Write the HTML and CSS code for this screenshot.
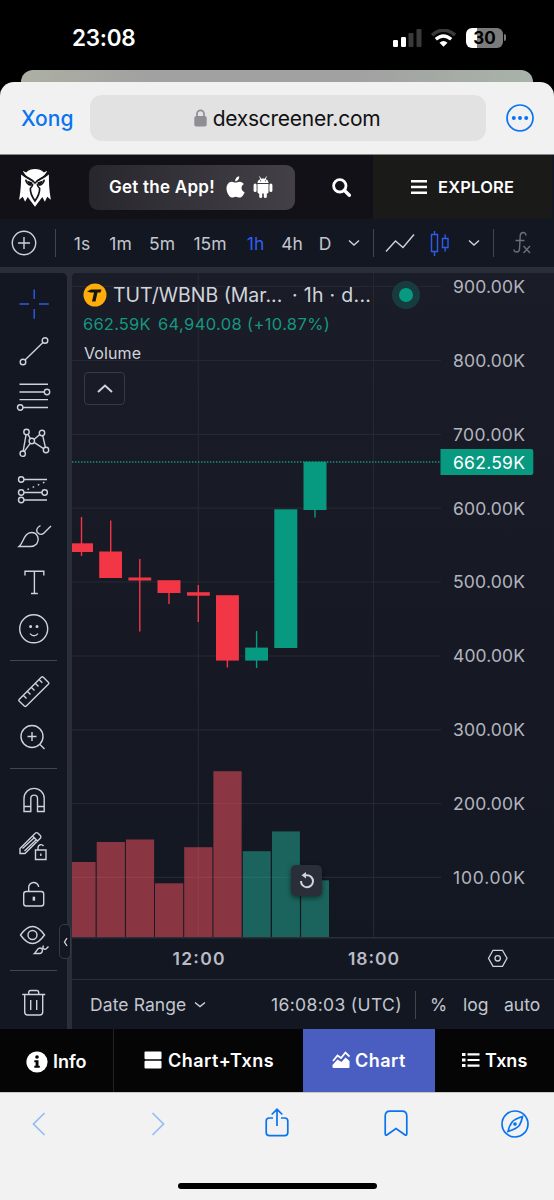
FILE: index.html
```html
<!DOCTYPE html>
<html lang="vi">

<head>
  <meta charset="utf-8">
  <title>TUT/WBNB - dexscreener.com</title>
  <link rel="stylesheet" href="styles.css">
</head>

<body>
  <div class="phone">
    <div class="status">
      <span class="clock">23:08</span>
      <svg class="signal" width="29" height="18" viewBox="0 0 29 18">
        <rect x="0" y="11" width="5" height="7" rx="1.3" fill="#fff"/>
        <rect x="8" y="8" width="5" height="10" rx="1.3" fill="#fff"/>
        <rect x="15.5" y="4" width="5" height="14" rx="1.3" fill="#3a3a3a"/>
        <rect x="23.5" y="0" width="5" height="18" rx="1.3" fill="#3a3a3a"/>
      </svg>
      <svg class="wifi" width="26" height="18" viewBox="0 0 26 18" fill="none">
        <path d="M1 6.200 Q12.500 -3.700 24 6.200" stroke="#3a3a3a" stroke-width="3.600"/>
        <path d="M4.800 10.300 Q12.500 3.600 20.200 10.300" stroke="#fff" stroke-width="3.400"/>
        <path d="M8.500 13.700 Q12.500 10.300 16.500 13.700 L12.500 17.800z" fill="#fff"/>
      </svg>
      <div class="battery"><span>30</span></div>
      <i class="battery-tip"></i>
    </div>
    <div class="back-card"></div>

    <div class="browser">
      <span class="done">Xong</span>
      <div class="address">
        <svg width="13" height="18" viewBox="0 0 13 18">
          <rect x="0.300" y="7" width="12.400" height="10.500" rx="2" fill="#8e8e93"/>
          <path d="M3 8V4.800a3.500 3.500 0 0 1 7 0V8" fill="none" stroke="#8e8e93" stroke-width="1.700"/>
        </svg>
        <span>dexscreener.com</span>
      </div>
      <svg class="more" width="30" height="30" viewBox="0 0 30 30" fill="#0a74f0">
        <circle cx="15" cy="15" r="13" fill="none" stroke="#0a74f0" stroke-width="1.700"/>
        <circle cx="8.800" cy="15" r="2"/><circle cx="15" cy="15" r="2"/><circle cx="21.200" cy="15" r="2"/>
      </svg>
    </div>

    <header class="dex">
      <svg class="logo" width="34" height="39" viewBox="54 72 102 118">
        <path fill="#fff" d="M63 92 C63 120 62 140 57 168 L68 159 L75 174 L83 160 L105 189 L127 160 L135 174 L142 159 L153 168 C148 140 147 120 147 92 L136 100 L105 118 L74 100z"/>
        <path fill="#fff" stroke="#131118" stroke-width="4" d="M64 76 L78 83 Q88 73 105 73 Q122 73 132 83 L146 76 Q139 97 121 104 Q111 108 105 118 Q99 108 89 104 Q71 97 64 76z"/>
        <path d="M77 107 Q79 122 94 124 M133 107 Q131 122 116 124 M98 119 Q99 127 91 134 Q90 150 105 172 Q120 150 119 134 Q111 127 112 119" fill="none" stroke="#131118" stroke-width="5"/>
        <path d="M81 110 L98 116 L94 124 Q83 121 81 110z M129 110 L112 116 L116 124 Q127 121 129 110z" fill="#131118"/>
      </svg>
      <div class="get-app">
        <span>Get the App!</span>
        <svg width="19" height="22" viewBox="0 0 19 22" fill="#fff">
          <path d="M13.200 0.300C13.400 3 11.500 5.300 9.200 5.300 8.900 2.700 11 0.700 13.200 0.300z"/>
          <path d="M9.700 6.600C11 6.500 12 5.600 13.700 5.700 15.500 5.800 17 6.700 17.800 8 14.400 10.200 15 14.800 18.600 16.200 17.800 18.500 15.900 21.500 13.900 21.600 12.300 21.700 11.800 20.700 9.800 20.700 7.900 20.700 7.400 21.600 5.900 21.600 3.400 21.500.6 17 .5 12.600.5 8.500 3 5.900 5.700 5.800 7.300 5.800 8.600 6.700 9.700 6.600z"/>
        </svg>
        <svg class="droid" width="20" height="22" viewBox="0 0 20 22" fill="#fff">
          <path d="M4.500 7C4.700 1 15.300 1 15.500 7z"/>
          <path d="M6.500 0.500l1.500 3M13.500.5L12 3.500" stroke="#fff" stroke-width="0.900"/>
          <circle cx="7.600" cy="4.800" r="0.600" fill="#39373e"/><circle cx="12.400" cy="4.800" r="0.600" fill="#39373e"/>
          <path d="M4.500 8h11v8a1.500 1.500 0 0 1-1.500 1.500H6A1.500 1.500 0 0 1 4.500 16z"/>
          <rect x="0.600" y="7.500" width="3" height="8.500" rx="1.500"/><rect x="16.400" y="7.500" width="3" height="8.500" rx="1.500"/>
          <rect x="6.200" y="14" width="3" height="8" rx="1.500"/><rect x="10.800" y="14" width="3" height="8" rx="1.500"/>
        </svg>
      </div>
      <svg class="search" width="19" height="19" viewBox="0 0 19 19" fill="none" stroke="#fff">
        <circle cx="7.800" cy="7.800" r="6.200" stroke-width="2.800"/>
        <path d="M12.300 12.300L17.300 17.300" stroke-width="3.400" stroke-linecap="round"/>
      </svg>
      <div class="explore">
        <svg width="16" height="16" viewBox="0 0 16 16" fill="#fff"><path d="M0 1h16v2.500H0zM0 6.800h16v2.500H0zM0 12.600h16v2.500H0z"/></svg>
        <span>EXPLORE</span>
      </div>
    </header>

    <nav class="intervals">
      <svg width="26" height="26" viewBox="0 0 26 26"><circle cx="13" cy="13" r="11.700"/><path d="M13 7v12M7 13h12"/></svg>
      <i class="bar"></i>
      <span>1s</span>
      <span>1m</span>
      <span>5m</span>
      <span>15m</span>
      <span class="active">1h</span>
      <span>4h</span>
      <span>D</span>
      <svg width="12" height="8" viewBox="0 0 12 8"><path d="M1 1.500l5 4.500 5-4.500"/></svg>
      <i class="bar"></i>
      <svg width="30" height="20" viewBox="0 0 30 20"><path d="M1 18.500L10.500 8l7.500 6.500L29 1.500"/></svg>
      <svg class="blue" width="20" height="26" viewBox="0 0 20 26"><path d="M1.500 4.500h6v17h-6zM4.500 1v3.500M4.500 21.500V26M12.500 8.500h5.500v9h-5.500zM15.200 4.500v4M15.200 17.500v4"/></svg>
      <svg width="12" height="8" viewBox="0 0 12 8"><path d="M1 1.500l5 4.500 5-4.500"/></svg>
      <i class="bar"></i>
      <svg class="dim" width="20" height="26" viewBox="0 0 20 26"><path d="M14 5.500C14 1.500 8.500 1.500 8.200 6L7.500 19c-.3 4-5.500 4-5.500.5M3.500 10.500h9M11.500 16l6.500 7M18 16l-6.500 7"/></svg>
    </nav>

    <main class="workspace">
      <aside class="tools">
        <svg class="tool blue" viewBox="0 0 36 36"><path d="M3.500 18h9.500M23 18h9.800M18.200 3.500V13M18.200 23v9.800"/></svg>
        <svg class="tool" viewBox="0 0 36 36"><circle cx="7" cy="29" r="2.800"/><circle cx="29" cy="7.500" r="2.800"/><path d="M9 27L27 9.500"/></svg>
        <svg class="tool" viewBox="0 0 36 36"><path d="M3.500 5.300H32M3.500 13H28M3.500 20.600H32M7 28.500H32"/><circle cx="31" cy="13" r="2.700"/><circle cx="4.200" cy="28.500" r="2.700"/></svg>
        <svg class="tool" viewBox="0 0 36 36"><path d="M10 9.800L7.200 26M8.300 26.400L14.200 18.300M18 14.500L23.800 9.500M26.700 10.700L29.400 22.300M27.600 23.600L18.100 17.400M14.500 13.800L12 9.400"/><circle cx="10.500" cy="7" r="2.700"/><circle cx="26" cy="8" r="2.700"/><circle cx="15.800" cy="16" r="2.700"/><circle cx="30" cy="25" r="2.700"/><circle cx="6.700" cy="28.700" r="2.700"/></svg>
        <svg class="tool" viewBox="0 0 36 36"><path d="M8 7.500H31M8 20.500H26M8 28H31"/><path d="M11.500 17.500L29 10" stroke-dasharray="1.600 4"/><circle cx="5.200" cy="7.500" r="2.700"/><circle cx="5.200" cy="20.500" r="2.700"/><circle cx="28.700" cy="20.500" r="2.700"/><circle cx="5.200" cy="28" r="2.700"/></svg>
        <svg class="tool" viewBox="0 0 36 36"><path d="M3 28.500C7.500 25 8 14.500 15.500 14.500 21.500 14.500 24 21 20.500 26 18.500 28.300 17 28.500 14.500 28.500zM24.500 7.500C19.800 10 20 13.500 22 15 24 16.700 26.500 16.500 28 15L35 8"/></svg>
        <svg class="tool" viewBox="0 0 36 36"><path d="M9 11.500V7.200H27.800V11.500M18.400 7.200V29.500M15 29.500H21.800"/></svg>
        <svg class="tool" viewBox="0 0 36 36"><circle cx="17.700" cy="17.800" r="14"/><path d="M14 22.600Q18 27 22 22.600"/><circle class="fill" cx="14.600" cy="15.600" r="0.800"/><circle class="fill" cx="21" cy="15.600" r="0.800"/></svg>
        <i class="rule"></i>
        <svg class="tool" viewBox="0 0 36 36"><path d="M3.300 26.300L25.300 4.200Q26.300 3.200 27.300 4.200L32.300 9.200Q33.300 10.200 32.300 11.200L10.300 33Q9.300 34 8.300 33L3.300 28.200Q2.300 27.200 3.300 26.300zM7.500 22.500L10.500 25.500M11.500 18.500L14.500 21.500M15.500 14.500L18.500 17.500M19.500 10.500L22.500 13.500M23.300 6.700L26.300 9.700"/></svg>
        <svg class="tool" viewBox="0 0 36 36"><circle cx="16" cy="16.500" r="11"/><path d="M24 24.500L28.500 29M16 12v9M11.500 16.500h9"/></svg>
        <i class="rule"></i>
        <svg class="tool" viewBox="0 0 36 36"><path d="M8 29.500V16.500a10 10 0 0 1 20.200 0V29.500H21.500V16.500a3.300 3.300 0 0 0-6.700 0V29.500zM8 24.500h6.800M21.500 24.500h6.700"/></svg>
        <svg class="tool" viewBox="0 0 36 36"><path d="M4 25.500V20.500L19.500 5Q20.700 4.200 22 5.200L24.500 7.700Q25.300 8.800 24.500 10L9 25.500zM16.500 8L21.500 13M6.500 20.500L18.500 9.500M8.500 23L20 12"/><path d="M19.500 22h10.500v9.500H19.500zM22 22v-2.500a3 3 0 0 1 5.500-1.500M24.800 25.500v2.500"/></svg>
        <svg class="tool" viewBox="0 0 36 36"><rect x="7.700" y="16.500" width="20" height="14.500" rx="2.500"/><path d="M12.700 16.500V13a5 5 0 0 1 10-1"/><path d="M17.900 21.700v4" stroke-width="2.500"/></svg>
        <svg class="tool" viewBox="0 0 36 36"><path d="M4.500 14Q16.500-3 28.500 14 16.500 31 4.500 14z"/><circle cx="16.500" cy="14" r="4.500"/><path d="M18.500 32.500C21 30.500 21 27 24 27 27.500 27 27 32.500 23.500 32.500zM27.500 24.500C25.500 28 29 29 30.500 27.500L32.500 25.500"/></svg>
        <i class="rule"></i>
        <svg class="tool" viewBox="0 0 36 36"><path d="M6.200 11.500H29.200M8.700 11.500V29Q8.700 32 11.700 32H23.700Q26.700 32 26.700 29V11.500M12.700 11.500V9.500Q12.700 7.500 14.700 7.500H20.700Q22.700 7.500 22.700 9.500V11.500M14.700 17V27M20.700 17V27"/></svg>
        <div class="collapse"><svg width="5" height="10" viewBox="0 0 5 10"><path d="M4 1L1.500 5 4 9"/></svg></div>
      </aside>

      <section class="chart">
        <svg class="plot" width="482" height="706" viewBox="72 273 482 706">
          <defs>
            <linearGradient id="bg" x1="0" y1="0" x2="0" y2="1">
              <stop offset="0" stop-color="#1a1c27"/>
              <stop offset="1" stop-color="#131722"/>
            </linearGradient>
          </defs>
          <rect x="72" y="273" width="482" height="706" fill="url(#bg)"/>
          <path class="grid" d="M72 286.500H441M72 360.500H441M72 434.300H441M72 508.200H441M72 582H441M72 656H441M72 729.800H441M72 803.500H441M72 877.300H441M198.300 273V937M373.500 273V937"/>

          <!-- volume -->
          <g class="vol-down">
            <rect x="72" y="862" width="23.600" height="75"/>
            <rect x="96.700" y="842" width="28.200" height="95"/>
            <rect x="125.900" y="839.500" width="28.200" height="97.500"/>
            <rect x="155" y="883.300" width="28.200" height="53.700"/>
            <rect x="184.200" y="847.200" width="28.200" height="89.800"/>
            <rect x="213.400" y="771.200" width="28.200" height="165.800"/>
          </g>
          <g class="vol-up">
            <rect x="242.800" y="851.200" width="27.900" height="85.800"/>
            <rect x="272" y="831.400" width="27.900" height="105.600"/>
            <rect x="301.100" y="880.300" width="27.900" height="56.700"/>
          </g>

          <!-- candles -->
          <path class="last" d="M72 462H441"/>
          <g class="down">
            <path d="M81.500 517V556M110.700 520.500V552M139.800 559V631.500M169 590V604M198.300 585V622M227.400 650V667.500"/>
            <rect x="72" y="543.300" width="21" height="8.700"/>
            <rect x="99.200" y="551.500" width="22.800" height="26.500"/>
            <rect x="128.400" y="577.500" width="22.800" height="3"/>
            <rect x="157.500" y="580.200" width="23" height="12.800"/>
            <rect x="187" y="592.200" width="22.800" height="3.500"/>
            <rect x="216" y="595.200" width="22.900" height="65.400"/>
          </g>
          <g class="up">
            <path d="M256.600 631V668M315 505V517.500"/>
            <rect x="245.200" y="647.600" width="22.800" height="13"/>
            <rect x="274.300" y="509.300" width="23" height="138.700"/>
            <rect x="303.500" y="461.700" width="23" height="48.300"/>
          </g>

          <g class="price">
            <text x="453" y="293" textLength="72">900.00K</text>
            <text x="453" y="367" textLength="72">800.00K</text>
            <text x="453" y="440.700" textLength="72">700.00K</text>
            <text x="453" y="514.500" textLength="72">600.00K</text>
            <text x="453" y="588.300" textLength="72">500.00K</text>
            <text x="453" y="662.200" textLength="72">400.00K</text>
            <text x="453" y="736" textLength="72">300.00K</text>
            <text x="453" y="809.800" textLength="72">200.00K</text>
            <text x="453" y="883.500" textLength="72">100.00K</text>
            <path d="M440.500 449H531Q533.300 449 533.300 451V473Q533.300 475 531 475H440.500z" fill="#089981"/>
            <text class="now" x="453" y="468.700" textLength="72">662.59K</text>
          </g>

          <path class="axis-line" d="M72 937.700H554"/>
          <g class="time">
            <text x="172.500" y="965.300" textLength="52">12:00</text>
            <text x="348" y="965.300" textLength="51">18:00</text>
          </g>
          <path class="cog" d="M488.500 958.300L493 950.300H502.500L507 958.300 502.500 966.300H493z"/>
          <circle class="cog" cx="497.700" cy="958.300" r="2.700"/>
        </svg>

        <div class="legend">
          <div class="symbol">
            <svg width="24" height="24" viewBox="0 0 24 24"><circle cx="12" cy="12" r="11.500" fill="#ffac0c"/><path d="M4 8.500L8 6.500H18.500L17.500 9.500H14.500L12.500 18.500H9L11 9.500H7.500z" fill="#15130f"/></svg>
            <span class="pair">TUT/WBNB (Mar...</span>
            <span class="meta">· 1h · d...</span>
            <i class="live"></i>
          </div>
          <div class="change"><span class="close">662.59K</span><span class="diff">64,940.08 (+10.87%)</span></div>
          <div class="volume">Volume</div>
          <div class="fold"><svg width="16" height="9" viewBox="0 0 16 9"><path d="M1 8l7-6.500L15 8"/></svg></div>
        </div>

        <div class="reset">
          <svg width="18" height="18" viewBox="0 0 18 18"><path d="M3 9a6 6 0 1 0 6-5.800H6" fill="none" stroke="#d1d4dc" stroke-width="2"/><path d="M8 0v6.500L3.500 3.200z" fill="#d1d4dc"/></svg>
        </div>

        <footer class="range">
          <span class="date">Date Range</span>
          <svg width="12" height="8" viewBox="0 0 12 8"><path d="M1 1.500l5 4 5-4"/></svg>
          <span class="utc">16:08:03 (UTC)</span>
          <i class="bar"></i>
          <span class="pct">%</span>
          <span class="log">log</span>
          <span class="auto">auto</span>
        </footer>
      </section>
    </main>

    <nav class="tabs">
      <div class="tab info">
        <svg width="22" height="22" viewBox="0 0 22 22"><circle cx="11" cy="11" r="10.600" fill="#fff"/><circle cx="11" cy="6" r="1.800" fill="#050505"/><path d="M8.300 9.200h4.200v5.600h1.300v2H8.300v-2h1.300v-3.600H8.300z" fill="#050505"/></svg>
        <span>Info</span>
      </div>
      <div class="tab both">
        <svg width="18" height="18" viewBox="0 0 18 18" fill="#fff"><rect x="0.500" y="0.500" width="17" height="7.700" rx="1"/><rect x="0.500" y="9.700" width="17" height="7.700" rx="1"/></svg>
        <span>Chart+Txns</span>
      </div>
      <div class="tab selected">
        <svg width="18" height="18" viewBox="0 0 18 18"><path d="M1 10L5.500 4.500 9 7 13.500 1.500 17.500 5.500" fill="none" stroke="#fff" stroke-width="1.800"/><path d="M0.500 16V14L5.500 8.500 9.500 11 13.500 6.500 17.500 10V16Q17.500 17 16.500 17H1.500Q.5 17 .5 16z" fill="#fff"/></svg>
        <span>Chart</span>
      </div>
      <div class="tab txns">
        <svg width="18" height="16" viewBox="0 0 18 16" fill="#fff"><path d="M0 1h3.500v3H0zM0 6.500h3.500v3H0zM0 12h3.500v3H0zM5.500 1.300H17.500v2.200H5.500zM5.500 6.900H17.500v2.200H5.500zM5.500 12.500H17.500v2.200H5.500z"/></svg>
        <span>Txns</span>
      </div>
    </nav>

    <div class="safari">
      <svg class="faded" width="28" height="32" viewBox="0 0 28 32"><path d="M19.500 5L8.500 16 19.500 27"/></svg>
      <svg class="faded" width="28" height="32" viewBox="0 0 28 32"><path d="M8.500 5L19.500 16 8.500 27"/></svg>
      <svg width="28" height="32" viewBox="0 0 28 32"><path d="M10 10H6.500Q3.200 10 3.200 13V24.500Q3.200 27.700 6.500 27.700H21.500Q24.800 27.700 24.800 24.500V13Q24.800 10 21.500 10H18M14 18V1.500M8.700 6.500L14 1.300 19.300 6.500"/></svg>
      <svg width="28" height="32" viewBox="0 0 28 32"><path d="M3.200 25.500V8Q3.200 3.200 8 3.200H20Q24.800 3.200 24.800 8V25.500Q24.800 28 22.800 26.800L14 20.500 5.200 26.800Q3.200 28 3.200 25.500z"/></svg>
      <svg width="28" height="32" viewBox="0 0 28 32"><circle cx="14" cy="16" r="13"/><path d="M21.500 8.500Q20.500 14 18.300 17.500 16 20.500 7 23.500 8 18 11.500 13.500 14 11 21.500 8.500z"/><circle cx="14" cy="16" r="1" fill="#0a74f0"/></svg>
    </div>
    <div class="home"><i></i></div>
  </div>
</body>

</html>
```
FILE: styles.css
```css
* {
  box-sizing: border-box;
}

body {
  margin: 0;
  background: #000;
  font-family: Inter, "Liberation Sans", sans-serif;
}

svg {
  display: block;
  flex: none;
}

span {
  white-space: nowrap;
}

.phone {
  width: 554px;
  height: 1200px;
  overflow: hidden;
}

/* status bar */
.status {
  display: flex;
  align-items: center;
  height: 70px;
  padding: 5px 0 0 72px;
  color: #fff;
}

.clock {
  width: 321px;
  font-size: 22.5px;
  font-weight: 600;
  letter-spacing: -0.25px;
}

.wifi {
  margin-left: 9px;
}

.battery {
  width: 37px;
  height: 20px;
  margin-left: 9px;
  border-radius: 6px;
  background: linear-gradient(90deg, #fff 11px, #7b7b7b 11px);
  color: #000;
  font-size: 17px;
  font-weight: 700;
  line-height: 20px;
  text-align: center;
}

.battery-tip {
  width: 2px;
  height: 7px;
  margin-left: 1px;
  border-radius: 0 2px 2px 0;
  background: #7b7b7b;
}

.back-card {
  height: 26px;
  margin: 0 21px -14px;
  border-radius: 12px;
  background: linear-gradient(90deg, #adb0a3, #a1a1a1 25%, #a1a1a1 65%, #a9b3a9);
}

/* address bar */
.browser {
  position: relative;
  display: flex;
  align-items: center;
  height: 73px;
  padding-left: 21px;
  border-bottom: 1px solid #888;
  border-radius: 14px 14px 0 0;
  background: #f1f1f2;
}

.done {
  width: 69px;
  color: #0a74f0;
  font-size: 21px;
  font-weight: 500;
}

.address {
  display: flex;
  align-items: center;
  justify-content: center;
  gap: 6px;
  width: 396px;
  height: 46px;
  padding-right: 2px;
  border-radius: 12px;
  background: #e2e2e3;
  color: #111;
  font-size: 21px;
  letter-spacing: -0.25px;
}

.more {
  margin-left: 19px;
}

/* site header */
.dex {
  display: flex;
  align-items: center;
  height: 64px;
  padding-left: 18px;
  background: #131118;
  color: #fff;
}

.get-app {
  display: flex;
  align-items: center;
  width: 206px;
  height: 45px;
  margin-left: 37px;
  padding-left: 20px;
  border-radius: 9px;
  background: linear-gradient(90deg, #28272d, #434147);
  font-size: 17px;
  font-weight: 600;
  letter-spacing: 0.25px;
}

.get-app span {
  width: 117px;
}

.droid {
  margin-left: 8px;
}

.search {
  margin: 0 22px 0 37px;
}

.explore {
  display: flex;
  align-items: center;
  gap: 11px;
  width: 181px;
  height: 64px;
  padding-left: 38px;
  border-right: 2px solid #131722;
  background: #1a1a19;
  font-size: 16.5px;
  font-weight: 600;
  letter-spacing: 0.2px;
}

/* interval row */
.intervals {
  display: grid;
  grid-template-columns: 48px 14px 40px 37px 46px 50px 41px 32px 34px 24px 15px 38px 42px 26px 12px 46px;
  align-items: center;
  justify-items: center;
  height: 48px;
  background: #131722;
  color: #c3c6ce;
  font-size: 17.5px;
}

.intervals svg,
.range svg,
.tool,
.collapse svg,
.fold svg {
  fill: none;
  stroke: #cfd2da;
  stroke-width: 1.4;
}

.intervals .active {
  color: #2f5fee;
}

.intervals .blue,
.tool.blue {
  stroke: #2f5bea;
}

.intervals .dim {
  stroke: #6c6f79;
}

.bar {
  width: 1px;
  height: 28px;
  background: #434651;
}

/* chart workspace */
.workspace {
  display: flex;
  gap: 5px;
  height: 762px;
  padding-top: 6px;
  background: #2a2e39;
}

.tools {
  position: relative;
  display: flex;
  flex-direction: column;
  align-items: center;
  width: 67px;
  padding-top: 8px;
  border-radius: 0 5px 0 0;
  background: #131722;
}

.tool {
  width: 36px;
  height: 36px;
  margin: 5.2px 0;
  stroke-width: 1.4;
}

.tool .fill {
  fill: #cfd2da;
}

.rule {
  width: 47px;
  height: 1px;
  margin: 7.500px 0;
  background: #434651;
}

.collapse {
  position: absolute;
  left: 59px;
  top: 651px;
  display: grid;
  place-items: center;
  width: 12px;
  height: 35px;
  border: 1px solid #363a45;
  border-radius: 5px;
  background: #131722;
}

.chart {
  position: relative;
  width: 482px;
  overflow: hidden;
  border-radius: 5px 0 0 0;
  background: #131722;
}

.grid {
  stroke: #252833;
  stroke-width: 1.2;
}

.vol-down {
  fill: rgba(247, 82, 95, 0.52);
}

.vol-up {
  fill: rgba(34, 171, 148, 0.52);
}

.down {
  fill: #f23645;
  stroke: none;
}

.down path {
  stroke: #f23645;
  stroke-width: 1.4;
}

.up {
  fill: #089981;
}

.up path {
  stroke: #089981;
  stroke-width: 1.4;
}

.last {
  stroke: #179580;
  stroke-width: 1.3;
  stroke-dasharray: 1.400 1.600;
}

.price {
  fill: #b2b5be;
  font-size: 17.5px;
}

.price .now {
  fill: #fff;
}

.axis-line {
  stroke: #2a2e39;
  stroke-width: 1.5;
}

.time {
  fill: #b9bcc5;
  font-size: 17.5px;
  font-weight: 600;
}

.cog {
  fill: none;
  stroke: #cfd2da;
  stroke-width: 1.3;
}

/* symbol legend over the plot */
.legend {
  position: absolute;
  left: 11px;
  top: 8px;
  color: #d1d4dc;
}

.symbol {
  display: flex;
  align-items: center;
  height: 28px;
  font-size: 19.5px;
}

.pair {
  width: 179px;
  margin-left: 6px;
}

.meta {
  width: 90px;
  letter-spacing: 0.3px;
}

.live {
  width: 28px;
  height: 28px;
  margin-left: 10px;
  border: 7.5px solid #183b40;
  border-radius: 50%;
  background: #089981;
}

.change {
  display: flex;
  height: 30px;
  color: #159780;
  font-size: 16.5px;
  line-height: 30px;
}

.close {
  width: 75px;
  letter-spacing: 0.2px;
}

.diff {
  letter-spacing: 0.36px;
}

.volume {
  padding-left: 1px;
  font-size: 16px;
  letter-spacing: 0.1px;
  line-height: 28px;
}

.fold {
  display: grid;
  place-items: center;
  width: 41px;
  height: 33px;
  margin: 5px 0 0 1px;
  border: 1px solid #363a45;
  border-radius: 4px;
}

.fold svg {
  stroke-width: 2;
}

.reset {
  position: absolute;
  left: 219px;
  top: 592px;
  display: grid;
  place-items: center;
  width: 31px;
  height: 31px;
  border-radius: 5px;
  background: #2a2e39;
  box-shadow: 0 2px 5px rgba(0, 0, 0, 0.5);
}

.range {
  display: flex;
  align-items: center;
  height: 50px;
  padding-left: 18px;
  border-top: 1px solid #2a2e39;
  color: #c3c6ce;
  font-size: 17.5px;
}

.date {
  width: 104px;
  letter-spacing: 0.1px;
}

.utc {
  width: 144px;
  margin-left: 65px;
  letter-spacing: 0.35px;
}

.pct {
  width: 33px;
  margin-left: 14px;
}

.log {
  width: 41px;
}

/* bottom tabs */
.tabs {
  display: flex;
  height: 63px;
  background: #050505;
  color: #fff;
  font-size: 18px;
  font-weight: 600;
  letter-spacing: 0.5px;
}

.tab {
  display: flex;
  align-items: center;
  gap: 5px;
  padding-bottom: 1px;
}

.info {
  width: 114px;
  padding: 2px 0 0 26px;
  border-right: 1px solid #222;
  letter-spacing: 0;
}

.both {
  gap: 6px;
  width: 189px;
  padding-left: 30px;
}

.selected {
  width: 132px;
  padding-left: 29px;
  background: #4a5ec1;
}

.txns {
  padding-left: 27px;
  letter-spacing: 0;
}

/* browser toolbar */
.safari {
  display: flex;
  justify-content: space-between;
  height: 83px;
  padding: 15px 25px 0;
  border-top: 1px solid #c8c8c8;
  background: #f2f2f3;
}

.safari svg {
  fill: none;
  stroke: #0a74f0;
  stroke-width: 1.7;
}

.safari .faded {
  stroke: #92bdf2;
}

.home {
  display: flex;
  justify-content: center;
  height: 40px;
  padding-top: 8px;
  background: #f2f2f3;
}

.home i {
  width: 199px;
  height: 6px;
  border-radius: 3px;
  background: #000;
}
```
